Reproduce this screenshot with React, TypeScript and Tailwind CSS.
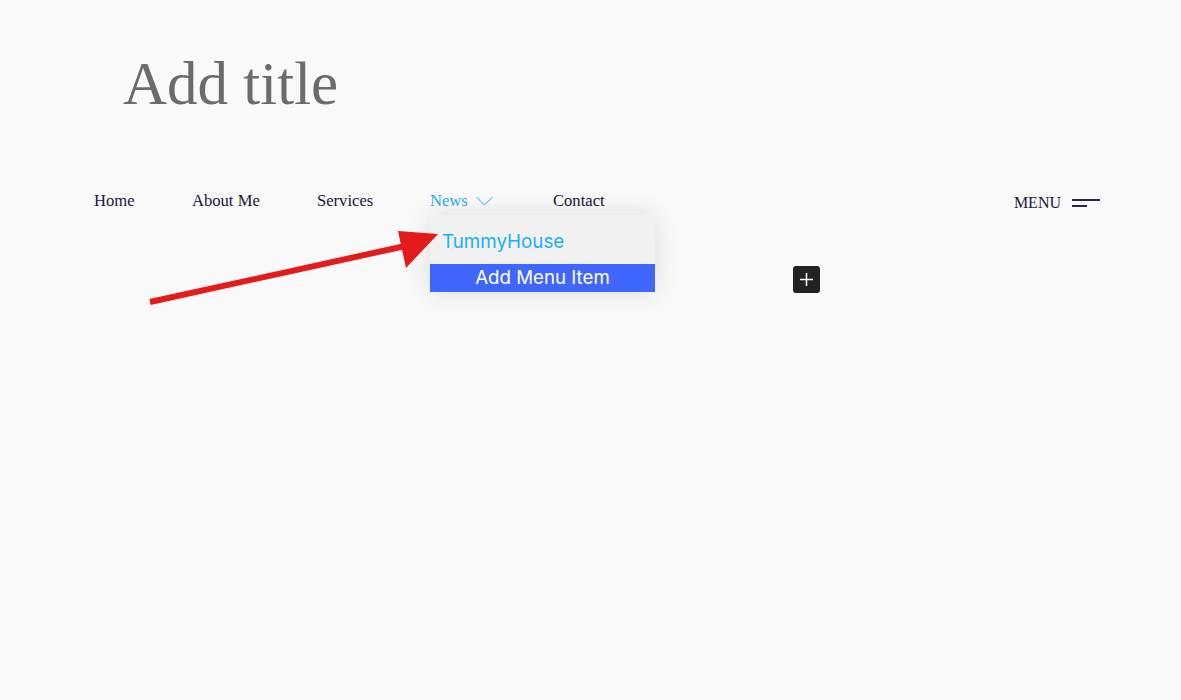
export default function App() {
  const items = [
    { label: "Home", w: "w-[98px]" },
    { label: "About Me", w: "w-[125px]" },
    { label: "Services", w: "w-[113px]" },
  ];
  return (
    <div className="relative min-h-[700px] w-full bg-[#f9f9f9] overflow-hidden">
      <div className="pl-[123px] pt-[44px]">
        <h1 className="text-[61px] leading-[80px] text-[#6b6b6b] [font-family:'Liberation_Serif',serif]">Add title</h1>
      </div>

      <nav className="mt-[65px] flex items-start pl-[94px] pr-[81px] [font-family:'Liberation_Serif',serif] text-[16.6px] leading-[24px] text-[#1b1638]">
        <ul className="flex items-start">
          {items.map((i) => (
            <li key={i.label} className={i.w}>
              {i.label}
            </li>
          ))}
          <li className="relative w-[123px] text-[#1ab0f8]">
            <span className="flex items-center gap-[8px]">
              News
              <svg width="17" height="10" viewBox="0 0 17 10" fill="none" stroke="#1ab0f8" strokeWidth="1">
                <path d="M0.5 1 L8.5 9 L16.5 1" />
              </svg>
            </span>
            <div className="absolute left-0 top-[26px] w-[225px] bg-[#f1f1f1] pt-[15px] shadow-[0_0_24px_rgba(0,0,0,0.12)] [font-family:Inter,sans-serif]">
              <div className="px-[12px] pb-[10px] text-[18.8px] leading-[24px] text-[#1ab0f8]">TummyHouse</div>
              <div className="h-[28px] bg-[#4066ff] text-center text-[18.7px] leading-[28px] text-white">Add Menu Item</div>
            </div>
          </li>
          <li>Contact</li>
        </ul>
        <div className="ml-auto mt-[2px] flex items-center gap-[11px]">
          <span className="text-[16px]">MENU</span>
          <span className="flex flex-col gap-[4px]">
            <span className="block h-[2px] w-[28px] bg-[#2a2160]" />
            <span className="block h-[2px] w-[15px] bg-[#2a2160]" />
          </span>
        </div>
      </nav>

      <button className="absolute left-[793px] top-[266px] flex h-[27px] w-[27px] items-center justify-center rounded-[3px] bg-[#222222]">
        <svg width="13" height="13" viewBox="0 0 13 13" stroke="white" strokeWidth="1.6">
          <path d="M6.5 0 V13 M0 6.5 H13" />
        </svg>
      </button>

      <svg className="pointer-events-none absolute left-0 top-0" width="1181" height="700">
        <line x1="150" y1="302" x2="410" y2="245" stroke="#e41b1b" strokeWidth="6" />
        <polygon points="438,234 398,231 406,268" fill="#e41b1b" />
      </svg>
    </div>
  );
}
